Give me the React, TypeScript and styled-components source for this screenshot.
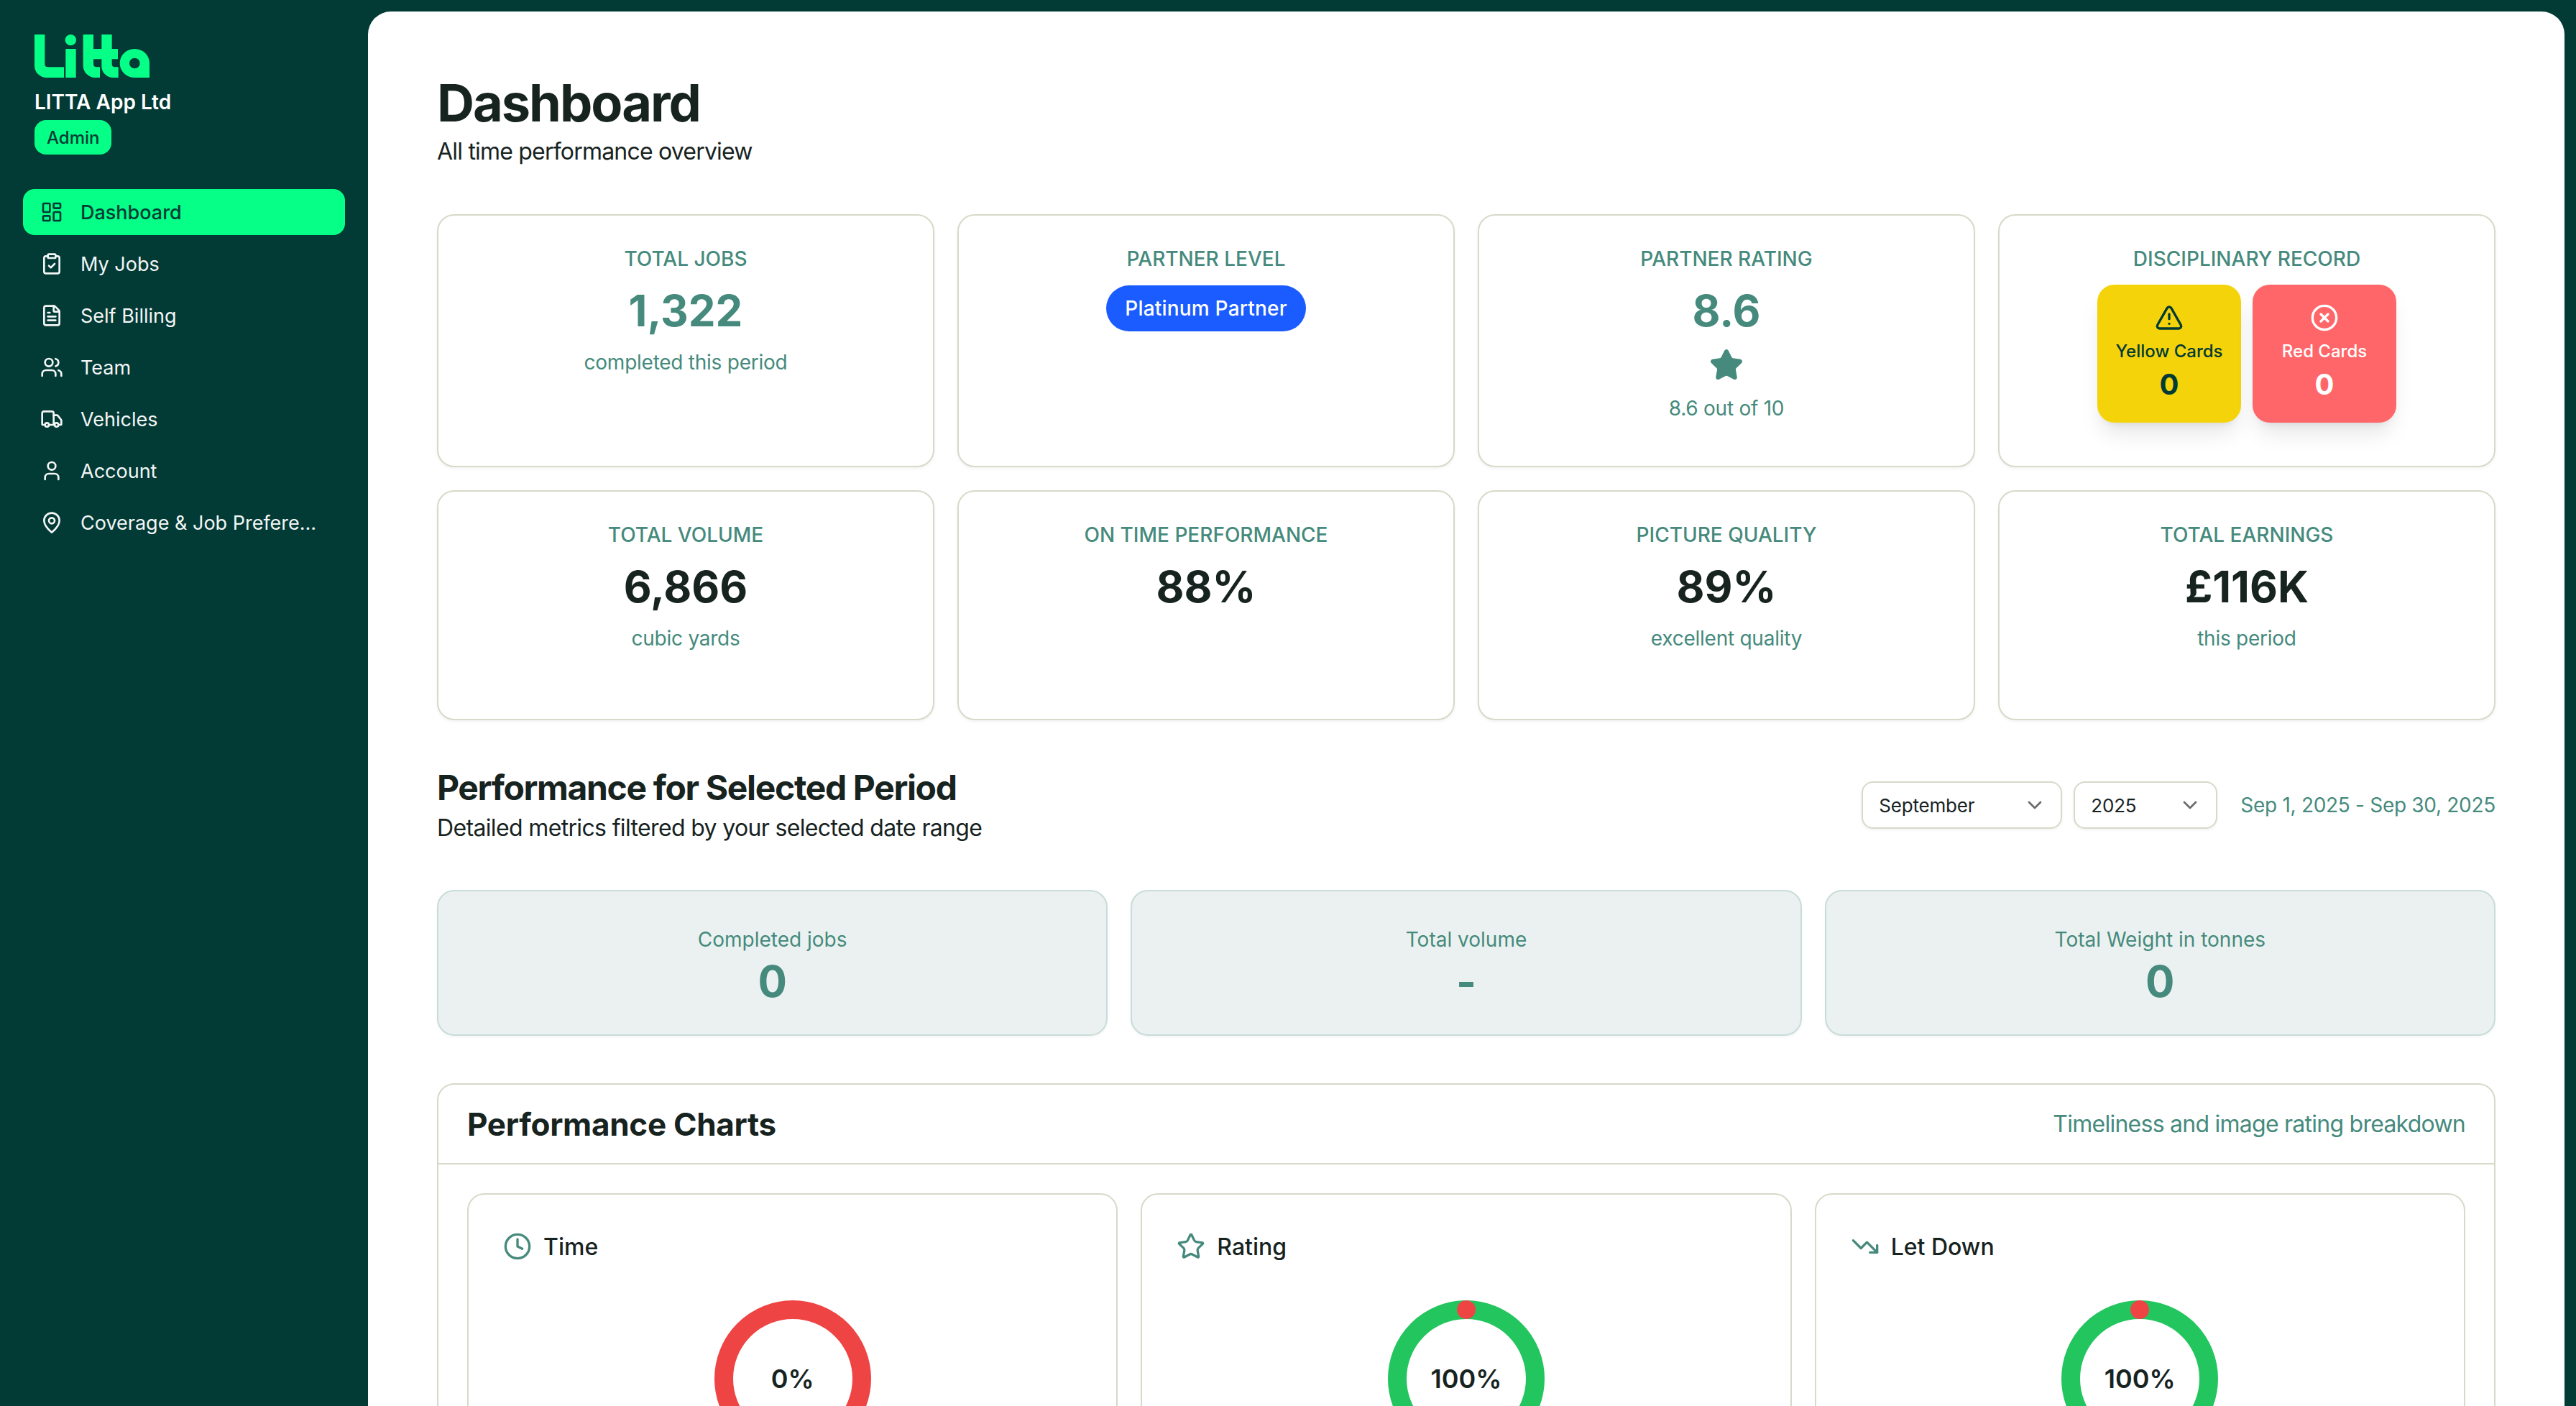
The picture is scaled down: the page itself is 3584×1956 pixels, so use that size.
import React from "react";
import styled, { createGlobalStyle } from "styled-components";
import {
  LayoutDashboard, ClipboardCheck, FileText, Users, Truck, User, MapPin,
  TriangleAlert, CircleX, Star, ChevronDown, Clock, TrendingDown,
} from "lucide-react";

const DARK = "#023a35";
const NEON = "#05ff87";
const MUTED = "#458a7c";
const INK = "#17231f";
const LINE = "#d8d9c8";

const Global = createGlobalStyle`
  html, body { margin: 0; padding: 0; height: 1956px; overflow: hidden; background: ${DARK}; }
  body { font-family: Inter, "Liberation Sans", sans-serif; color: ${INK}; }
  * { box-sizing: border-box; }
`;

const Shell = styled.div`
  display: flex;
  width: 3584px;
  height: 1956px;
  overflow: hidden;
`;

const Sidebar = styled.aside`
  flex: 0 0 512px;
  min-width: 0;
  padding: 48px 32px 0;
  background: ${DARK};
  display: flex;
  flex-direction: column;
`;

const Brand = styled.div`
  padding-left: 16px;
  display: flex;
  flex-direction: column;
  align-items: flex-start;
`;

const OrgName = styled.div`
  margin-top: 14px;
  font-size: 28px;
  line-height: 40px;
  font-weight: 600;
  color: #fff;
`;

const RoleBadge = styled.span`
  margin-top: 5px;
  height: 48px;
  padding: 0 17px;
  display: inline-flex;
  align-items: center;
  border-radius: 16px;
  background: ${NEON};
  color: ${DARK};
  font-size: 24px;
  font-weight: 500;
`;

const Nav = styled.nav`
  margin-top: 48px;
  display: flex;
  flex-direction: column;
  gap: 8px;
`;

const NavItem = styled.a<{ $active?: boolean }>`
  height: 64px;
  min-width: 0;
  padding: 0 24px;
  display: flex;
  align-items: center;
  gap: 24px;
  border-radius: 16px;
  font-size: 27px;
  font-weight: ${(p) => (p.$active ? 500 : 400)};
  color: ${(p) => (p.$active ? DARK : "#f3f6f5")};
  background: ${(p) => (p.$active ? NEON : "transparent")};
  svg { flex: 0 0 32px; }
`;

const NavLabel = styled.span`
  white-space: nowrap;
`;

const Main = styled.main`
  flex: 1;
  min-width: 0;
  margin: 16px 16px 0 0;
  padding: 87px 96px 0;
  background: #fff;
  border-radius: 32px 32px 0 0;
  overflow: hidden;
`;

const Title = styled.h1`
  margin: 0;
  font-size: 72px;
  line-height: 80px;
  font-weight: 700;
  letter-spacing: -2px;
  color: ${INK};
`;

const Subtitle = styled.p`
  margin: 4px 0 0;
  font-size: 32px;
  line-height: 48px;
  letter-spacing: -0.8px;
  color: ${INK};
`;

const KpiGrid = styled.div`
  margin-top: 63px;
  display: grid;
  grid-template-columns: repeat(4, 1fr);
  grid-template-rows: 352px 320px;
  gap: 32px;
`;

const KpiCard = styled.div`
  padding: 40px 24px 0;
  border: 2px solid ${LINE};
  border-radius: 24px;
  background: #fff;
  box-shadow: 0 2px 4px rgba(0, 0, 0, 0.05);
  display: flex;
  flex-direction: column;
  align-items: center;
  text-align: center;
`;

const KpiLabel = styled.div`
  font-size: 28px;
  line-height: 40px;
  font-weight: 500;
  text-transform: uppercase;
  color: ${MUTED};
`;

const KpiValue = styled.div<{ $dark?: boolean }>`
  margin-top: 16px;
  font-size: 60px;
  line-height: 72px;
  font-weight: 700;
  color: ${(p) => (p.$dark ? INK : MUTED)};
`;

const KpiNote = styled.div`
  margin-top: 16px;
  font-size: 28px;
  line-height: 40px;
  letter-spacing: -0.25px;
  color: ${MUTED};
`;

const TierPill = styled.span`
  margin-top: 17px;
  height: 64px;
  padding: 0 26px;
  display: inline-flex;
  align-items: center;
  border-radius: 999px;
  background: #1a5cff;
  color: #fff;
  font-size: 28px;
  letter-spacing: 0.2px;
  font-weight: 500;
`;

const RatingStar = styled.div`
  margin-top: 16px;
  height: 48px;
  display: flex;
  color: ${MUTED};
`;

const TileRow = styled.div`
  margin-top: 16px;
  display: flex;
  gap: 16px;
`;

const Tile = styled.div<{ $bg: string; $fg: string }>`
  width: 200px;
  height: 192px;
  padding-top: 26px;
  border-radius: 24px;
  background: ${(p) => p.$bg};
  color: ${(p) => p.$fg};
  box-shadow: 0 20px 30px -6px rgba(0, 0, 0, 0.1), 0 8px 12px -8px rgba(0, 0, 0, 0.1);
  display: flex;
  flex-direction: column;
  align-items: center;
`;

const TileLabel = styled.div`
  margin-top: 11px;
  font-size: 24px;
  line-height: 32px;
  font-weight: 500;
`;

const TileValue = styled.div`
  margin-top: 10px;
  font-size: 40px;
  line-height: 40px;
  font-weight: 700;
`;

const SectionHead = styled.div`
  margin-top: 66px;
  display: flex;
  justify-content: space-between;
  align-items: center;
`;

const SectionTitle = styled.h2`
  margin: 0;
  font-size: 48px;
  line-height: 56px;
  font-weight: 700;
  letter-spacing: -1.35px;
  color: ${INK};
`;

const SectionSub = styled.p`
  margin: 4px 0 0;
  font-size: 32px;
  line-height: 48px;
  letter-spacing: -0.65px;
  color: ${INK};
`;

const Filters = styled.div`
  display: flex;
  align-items: center;
  gap: 16px;
  margin-bottom: 4px;
`;

const SelectBox = styled.div<{ $w: number }>`
  width: ${(p) => p.$w}px;
  height: 66px;
  padding: 0 20px 0 22px;
  border: 2px solid ${LINE};
  border-radius: 16px;
  background: #fff;
  box-shadow: 0 2px 4px rgba(0, 0, 0, 0.05);
  display: flex;
  align-items: center;
  justify-content: space-between;
  font-size: 26px;
  letter-spacing: -0.2px;
  color: ${INK};
  svg { color: #6b6b6b; }
`;

const RangeText = styled.span`
  margin-left: 16px;
  font-size: 28px;
  letter-spacing: -0.3px;
  color: ${MUTED};
`;

const StatRow = styled.div`
  margin-top: 62px;
  display: grid;
  grid-template-columns: repeat(3, 1fr);
  gap: 32px;
`;

const StatCard = styled.div`
  padding: 47px 24px 38px;
  border: 2px solid #c8dcd8;
  border-radius: 24px;
  background: #ebf1f1;
  box-shadow: 0 2px 4px rgba(0, 0, 0, 0.04);
  text-align: center;
  color: ${MUTED};
`;

const StatLabel = styled.div`
  font-size: 28px;
  line-height: 40px;
`;

const StatValue = styled.div`
  margin-top: 2px;
  font-size: 60px;
  line-height: 72px;
  font-weight: 700;
`;

const ChartsPanel = styled.section`
  margin-top: 66px;
  border: 2px solid ${LINE};
  border-radius: 24px;
  background: #fff;
`;

const ChartsHead = styled.header`
  height: 111px;
  padding: 0 40px;
  border-bottom: 2px solid ${LINE};
  display: flex;
  align-items: center;
  justify-content: space-between;
`;

const ChartsTitle = styled.h3`
  margin: 0;
  font-size: 44px;
  line-height: 56px;
  font-weight: 700;
  letter-spacing: -0.3px;
  color: ${INK};
`;

const ChartsNote = styled.span`
  font-size: 32px;
  letter-spacing: -0.75px;
  color: ${MUTED};
`;

const ChartsBody = styled.div`
  padding: 40px;
  display: grid;
  grid-template-columns: repeat(3, 1fr);
  gap: 32px;
`;

const ChartCard = styled.div`
  padding: 52px 48px 48px;
  border: 2px solid ${LINE};
  border-radius: 24px;
  background: #fff;
`;

const ChartHead = styled.div`
  height: 40px;
  display: flex;
  align-items: center;
  gap: 16px;
  font-size: 32px;
  font-weight: 500;
  color: ${INK};
  svg { color: ${MUTED}; }
`;

const DonutWrap = styled.div`
  margin: 55px auto 0;
  width: 218px;
  height: 218px;
  display: grid;
  place-items: center;
  svg, span { grid-area: 1 / 1; }
`;

const DonutText = styled.span`
  font-size: 36px;
  font-weight: 600;
  color: ${INK};
`;

const Logo = () => (
  <svg width="160" height="60" viewBox="12 12 480 180" fill={NEON} aria-label="Litta">
    <path d="M12 12H55V135Q55 148 68 148H135V192H62A50 50 0 0 1 12 142Z" />
    <circle cx="163" cy="35" r="23" />
    <rect x="142" y="72" width="43" height="120" />
    <path d="M215 12H258V72H292V12H335V72H360V115H335V135Q335 148 348 148H362V192H340A48 48 0 0 1 292 142V115H258V135Q258 148 272 148H285V192H265A50 50 0 0 1 215 142Z" />
    <path fillRule="evenodd" d="M430 72A62 60 0 0 1 492 132V192H430A62 60 0 0 1 430 72ZM430 110A22 22 0 1 0 430 154A22 22 0 1 0 430 110Z" />
  </svg>
);

const Donut = ({ value, color, dot }: { value: string; color: string; dot?: boolean }) => (
  <DonutWrap>
    <svg width="218" height="218" viewBox="0 0 218 218">
      <circle cx="109" cy="109" r="96" fill="none" stroke={color} strokeWidth="26" />
      {dot && <circle cx="109" cy="13" r="13" fill="#ef4444" />}
    </svg>
    <DonutText>{value}</DonutText>
  </DonutWrap>
);

const navItems = [
  { icon: LayoutDashboard, label: "Dashboard", active: true },
  { icon: ClipboardCheck, label: "My Jobs" },
  { icon: FileText, label: "Self Billing" },
  { icon: Users, label: "Team" },
  { icon: Truck, label: "Vehicles" },
  { icon: User, label: "Account" },
  { icon: MapPin, label: "Coverage & Job Prefere..." },
];

export default function App() {
  return (
    <Shell>
      <Global />
      <Sidebar>
        <Brand>
          <Logo />
          <OrgName>LITTA App Ltd</OrgName>
          <RoleBadge>Admin</RoleBadge>
        </Brand>
        <Nav>
          {navItems.map(({ icon: Icon, label, active }) => (
            <NavItem key={label} $active={active}>
              <Icon size={32} />
              <NavLabel>{label}</NavLabel>
            </NavItem>
          ))}
        </Nav>
      </Sidebar>
      <Main>
        <Title>Dashboard</Title>
        <Subtitle>All time performance overview</Subtitle>

        <KpiGrid>
          <KpiCard>
            <KpiLabel>Total Jobs</KpiLabel>
            <KpiValue>1,322</KpiValue>
            <KpiNote>completed this period</KpiNote>
          </KpiCard>
          <KpiCard>
            <KpiLabel>Partner Level</KpiLabel>
            <TierPill>Platinum Partner</TierPill>
          </KpiCard>
          <KpiCard>
            <KpiLabel>Partner Rating</KpiLabel>
            <KpiValue>8.6</KpiValue>
            <RatingStar><Star size={48} fill={MUTED} /></RatingStar>
            <KpiNote>8.6 out of 10</KpiNote>
          </KpiCard>
          <KpiCard>
            <KpiLabel>Disciplinary Record</KpiLabel>
            <TileRow>
              <Tile $bg="#f5d30a" $fg={DARK}>
                <TriangleAlert size={40} />
                <TileLabel>Yellow Cards</TileLabel>
                <TileValue>0</TileValue>
              </Tile>
              <Tile $bg="#ff6669" $fg="#fff">
                <CircleX size={40} />
                <TileLabel>Red Cards</TileLabel>
                <TileValue>0</TileValue>
              </Tile>
            </TileRow>
          </KpiCard>
          <KpiCard>
            <KpiLabel>Total Volume</KpiLabel>
            <KpiValue $dark>6,866</KpiValue>
            <KpiNote>cubic yards</KpiNote>
          </KpiCard>
          <KpiCard>
            <KpiLabel>On Time Performance</KpiLabel>
            <KpiValue $dark>88%</KpiValue>
          </KpiCard>
          <KpiCard>
            <KpiLabel>Picture Quality</KpiLabel>
            <KpiValue $dark>89%</KpiValue>
            <KpiNote>excellent quality</KpiNote>
          </KpiCard>
          <KpiCard>
            <KpiLabel>Total Earnings</KpiLabel>
            <KpiValue $dark>£116K</KpiValue>
            <KpiNote>this period</KpiNote>
          </KpiCard>
        </KpiGrid>

        <SectionHead>
          <div>
            <SectionTitle>Performance for Selected Period</SectionTitle>
            <SectionSub>Detailed metrics filtered by your selected date range</SectionSub>
          </div>
          <Filters>
            <SelectBox $w={279}>September<ChevronDown size={32} /></SelectBox>
            <SelectBox $w={200}>2025<ChevronDown size={32} /></SelectBox>
            <RangeText>Sep 1, 2025 - Sep 30, 2025</RangeText>
          </Filters>
        </SectionHead>

        <StatRow>
          <StatCard>
            <StatLabel>Completed jobs</StatLabel>
            <StatValue>0</StatValue>
          </StatCard>
          <StatCard>
            <StatLabel>Total volume</StatLabel>
            <StatValue>-</StatValue>
          </StatCard>
          <StatCard>
            <StatLabel>Total Weight in tonnes</StatLabel>
            <StatValue>0</StatValue>
          </StatCard>
        </StatRow>

        <ChartsPanel>
          <ChartsHead>
            <ChartsTitle>Performance Charts</ChartsTitle>
            <ChartsNote>Timeliness and image rating breakdown</ChartsNote>
          </ChartsHead>
          <ChartsBody>
            <ChartCard>
              <ChartHead><Clock size={40} />Time</ChartHead>
              <Donut value="0%" color="#ef4444" />
            </ChartCard>
            <ChartCard>
              <ChartHead><Star size={40} />Rating</ChartHead>
              <Donut value="100%" color="#22c55e" dot />
            </ChartCard>
            <ChartCard>
              <ChartHead><TrendingDown size={40} />Let Down</ChartHead>
              <Donut value="100%" color="#22c55e" dot />
            </ChartCard>
          </ChartsBody>
        </ChartsPanel>
      </Main>
    </Shell>
  );
}
